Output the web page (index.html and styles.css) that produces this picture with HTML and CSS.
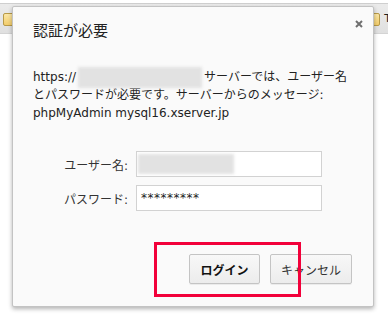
FILE: index.html
```html
<!DOCTYPE html>
<html lang="ja">
<head>
  <meta charset="UTF-8" />
  <title>認証が必要</title>
  <link rel="stylesheet" href="styles.css">
</head>
<body>
  <div class="bookmarks">
    <span class="folder"></span>
    <span class="bookmarks-right">
      <span class="folder"></span>
      <span class="bm-text">T</span>
    </span>
  </div>

  <div class="dialog">
    <h1 class="dialog-title">認証が必要</h1>
    <svg class="close" width="8" height="8" viewBox="0 0 8 8">
      <path d="M1 1 L7 7 M7 1 L1 7" stroke="#6f6f6f" stroke-width="2" />
    </svg>

    <p class="message">https://<span class="blur blur-host"></span>サーバーでは、ユーザー名とパスワードが必要です。サーバーからのメッセージ: phpMyAdmin mysql16.xserver.jp</p>

    <div class="form">
      <label class="label">ユーザー名:</label>
      <div class="field"><span class="blur blur-user"></span></div>
      <label class="label">パスワード:</label>
      <div class="field"><span class="dots">*********</span></div>
    </div>

    <div class="actions">
      <button class="btn btn-primary">ログイン</button>
      <button class="btn">キャンセル</button>
    </div>

    <!-- red highlight drawn over the login button -->
    <div class="highlight"></div>
  </div>
</body>
</html>
```

FILE: styles.css
```css
body {
  margin: 0;
  background: #fff;
  font-family: "DejaVu Sans", "Noto Sans CJK JP", sans-serif;
  color: #333;
  font-size: 12px;
}

.bookmarks {
  margin-top: 3px;
  height: 29px;
  border-top: 1px solid #cfcfcf;
  border-bottom: 1px solid #d4d4d4;
  background: linear-gradient(#ebebeb, #e0e0e0);
  display: flex;
  align-items: center;
  justify-content: space-between;
  padding: 0 0 0 3px;
}

.bookmarks-right {
  display: flex;
  align-items: center;
  gap: 4px;
  margin-right: -3px;
}

.folder {
  display: block;
  width: 12px;
  height: 11px;
  background: linear-gradient(#fbe7a6, #f2cc6b);
  border: 1px solid #b89a48;
  border-radius: 2px;
  margin-top: 2px;
}

.bm-text {
  font-size: 11px;
  color: #222;
}

.dialog {
  position: absolute;
  left: 12px;
  top: 6px;
  width: 319px;
  padding: 13px 21px 22px 20px;
  background: #fafafa;
  border: 1px solid #c3c3c3;
  border-radius: 2px;
  box-shadow: 0 2px 4px rgba(0, 0, 0, 0.3);
}

.dialog-title {
  margin: 0;
  font-family: "Noto Sans CJK JP", sans-serif;
  font-size: 15px;
  font-weight: normal;
  line-height: 20px;
  color: #222;
}

.close {
  position: absolute;
  right: 10px;
  top: 13px;
}

.message {
  margin: 28px 0 0;
  line-height: 18px;
  color: #222;
}

.blur {
  display: inline-block;
  background: #e2e2e2;
  filter: blur(1.5px);
}

.blur-host {
  width: 124px;
  height: 21px;
  margin: -2px 2px;
  vertical-align: middle;
}

.form {
  margin-top: 29px;
  display: grid;
  grid-template-columns: 95px 186px;
  column-gap: 8px;
  row-gap: 8px;
  align-items: center;
}

.label {
  text-align: right;
  color: #333;
}

.field {
  height: 24px;
  border: 1px solid #d2d2d2;
  background: #fff;
  display: flex;
  align-items: center;
  padding: 0 4px;
}

.blur-user {
  width: 96px;
  height: 20px;
  margin-left: -3px;
}

.dots {
  letter-spacing: 0.5px;
  font-size: 12px;
  color: #222;
}

.actions {
  margin-top: 43px;
  display: flex;
  justify-content: flex-end;
  gap: 10px;
}

.btn {
  height: 30px;
  padding: 0;
  font-family: "Noto Sans CJK JP", sans-serif;
  font-size: 12px;
  color: #333;
  background: linear-gradient(#f8f8f8, #ececec);
  border: 1px solid #c4c4c4;
  border-radius: 2px;
  box-shadow: 0 1px 0 rgba(0, 0, 0, 0.06);
  width: 82px;
}

.btn-primary {
  width: 71px;
  font-weight: bold;
  color: #111;
}

.highlight {
  position: absolute;
  left: 141px;
  top: 235px;
  width: 141px;
  height: 49px;
  border: 3px solid #f2003a;
}
```
